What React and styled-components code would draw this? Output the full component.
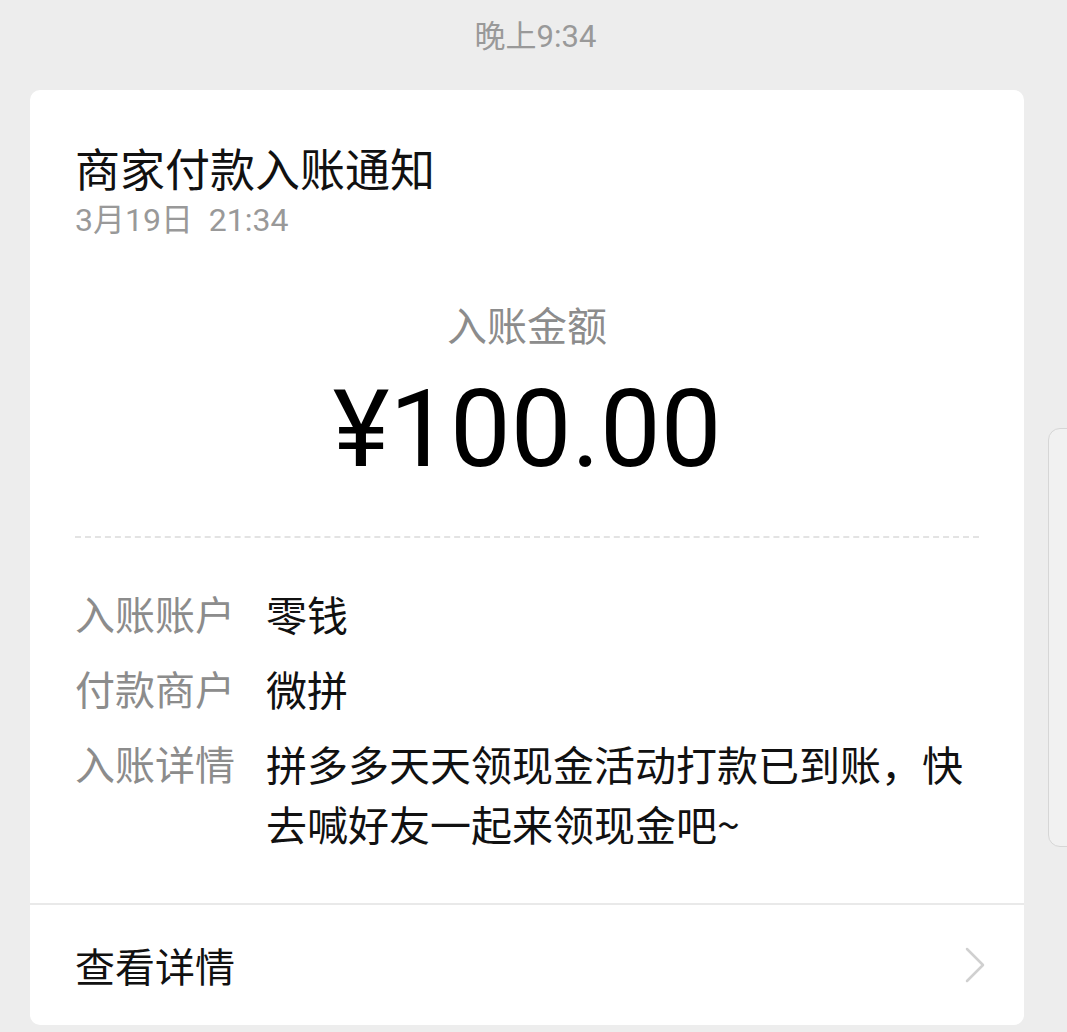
import React from "react";
import styled, { createGlobalStyle } from "styled-components";

const Global = createGlobalStyle`
  html, body { margin: 0; padding: 0; background: #ededed; }
  body { font-family: Roboto, "Noto Sans CJK SC", "Noto Sans", sans-serif; }
`;

const Page = styled.div`
  position: relative;
  width: 1067px;
  height: 1032px;
  overflow: hidden;
  background: #ededed;
`;

const TimeBar = styled.div`
  height: 90px;
  display: flex;
  justify-content: center;
  padding-top: 17px;
  padding-left: 4px;
  box-sizing: border-box;
  font-size: 31px;
  line-height: 40px;
  color: #999;
  font-family: Roboto, "Noto Sans CJK SC", sans-serif;
`;

const Card = styled.div`
  margin-left: 30px;
  width: 994px;
  background: #fff;
  border-radius: 10px;
  overflow: hidden;
`;

const Head = styled.div`
  padding: 48px 45px 0;
`;

const Title = styled.div`
  font-family: "Noto Sans CJK SC", sans-serif;
  font-size: 45px;
  line-height: 60px;
  color: #111;
`;

const DateLine = styled.div`
  font-size: 32px;
  line-height: 40px;
  color: #999;
  margin-top: 2px;
  white-space: pre;
`;

const AmountBlock = styled.div`
  display: flex;
  flex-direction: column;
  align-items: center;
  padding-top: 56px;
`;

const AmountLabel = styled.div`
  font-family: "Noto Sans CJK SC", sans-serif;
  font-size: 40px;
  line-height: 56px;
  color: #8c8c8c;
`;

const Amount = styled.div`
  font-family: Roboto, sans-serif;
  font-size: 108px;
  line-height: 120px;
  color: #000;
  margin-top: 17px;
`;

const Dashed = styled.div`
  margin: 47px 45px 0;
  height: 0;
  border-top: 2px dashed #e3e3e3;
`;

const Details = styled.div`
  padding: 45px 45px 50px;
  display: flex;
  flex-direction: column;
  gap: 15px;
`;

const Row = styled.div`
  display: flex;
  gap: 31px;
  font-family: "Noto Sans CJK SC", sans-serif;
  font-size: 41px;
  line-height: 60px;
`;

const Label = styled.div`
  flex: none;
  width: 160px;
  white-space: nowrap;
  font-size: 40px;
  color: #8c8c8c;
`;

const Value = styled.div`
  color: #111;
  flex: 1;
  padding-right: 10px;
`;

const Footer = styled.div`
  border-top: 2px solid #e9e9e9;
  height: 120px;
  display: flex;
  align-items: center;
  justify-content: space-between;
  padding: 0 38px 0 45px;
  font-family: "Noto Sans CJK SC", sans-serif;
  font-size: 40px;
  color: #111;
`;

const SideTab = styled.div`
  position: absolute;
  left: 1048px;
  top: 428px;
  width: 40px;
  height: 417px;
  border: 1px solid #d6d6d6;
  border-radius: 12px;
  background: #f1f1f1;
`;

export default function App() {
  return (
    <Page>
      <Global />
      <TimeBar>晚上9:34</TimeBar>
      <Card>
        <Head>
          <Title>商家付款入账通知</Title>
          <DateLine>3月19日  21:34</DateLine>
        </Head>
        <AmountBlock>
          <AmountLabel>入账金额</AmountLabel>
          <Amount>¥100.00</Amount>
        </AmountBlock>
        <Dashed />
        <Details>
          <Row>
            <Label>入账账户</Label>
            <Value>零钱</Value>
          </Row>
          <Row>
            <Label>付款商户</Label>
            <Value>微拼</Value>
          </Row>
          <Row>
            <Label>入账详情</Label>
            <Value>拼多多天天领现金活动打款已到账，快去喊好友一起来领现金吧~</Value>
          </Row>
        </Details>
        <Footer>
          <span>查看详情</span>
          <svg width="22" height="36" viewBox="0 0 22 36" fill="none">
            <polyline points="3,2 19,18 3,34" stroke="#d0d0d0" strokeWidth="2.5" strokeLinejoin="round" strokeLinecap="round" />
          </svg>
        </Footer>
      </Card>
      <SideTab />
    </Page>
  );
}
